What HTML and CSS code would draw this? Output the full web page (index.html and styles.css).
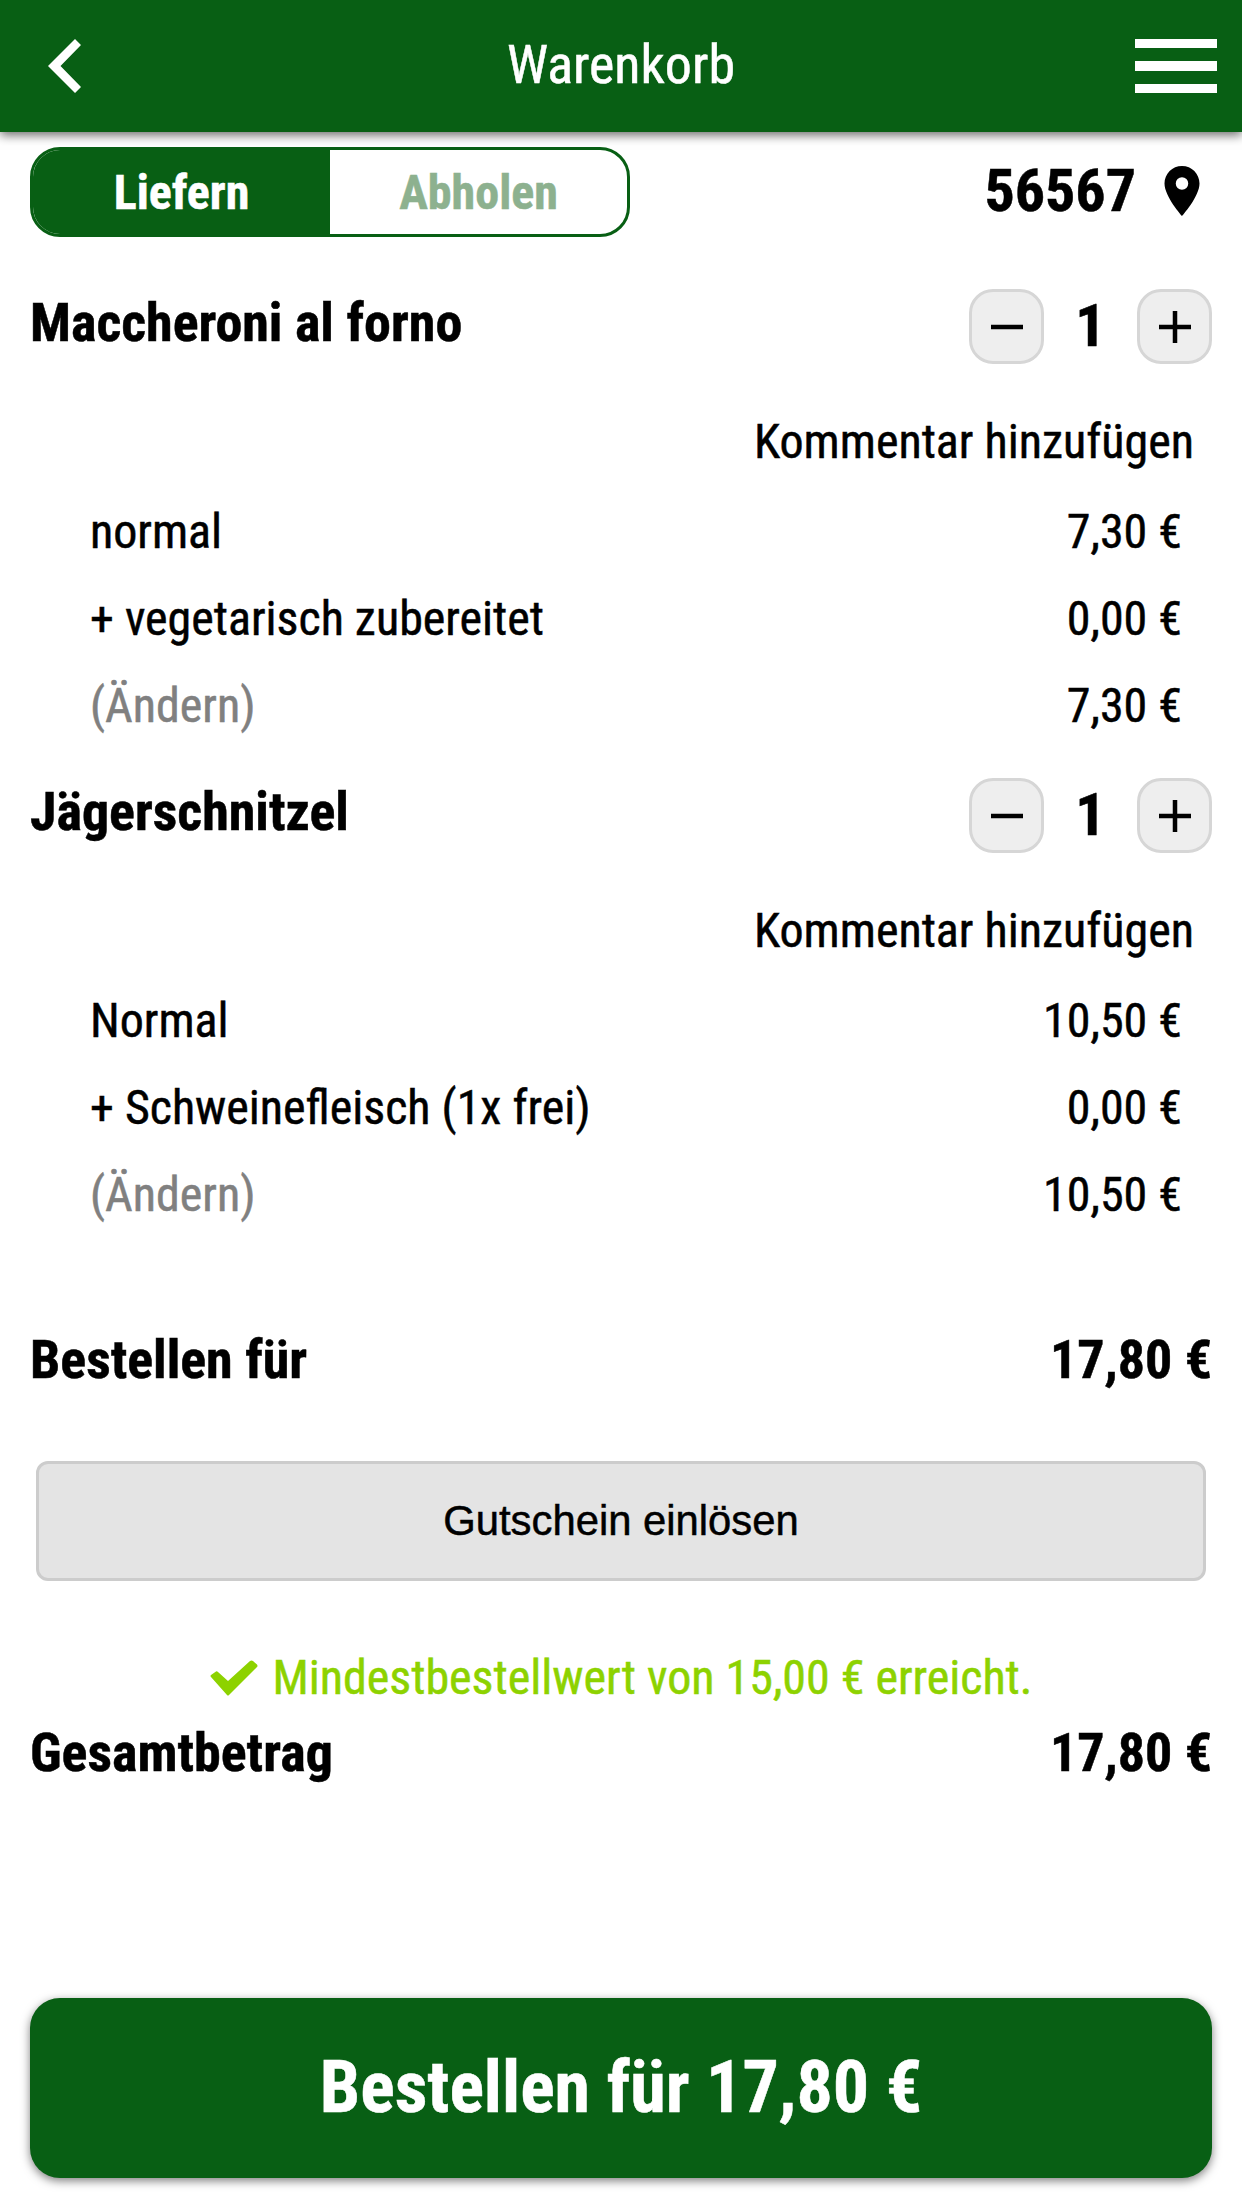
FILE: index.html
```
<!DOCTYPE html>
<html lang="de">
<head>
    <meta charset="UTF-8">
    <title>Warenkorb</title>
    <link rel="stylesheet" href="styles.css">
</head>
<body>
    <!-- Kopfzeile -->
    <header class="header">
        <svg class="back" viewBox="0 0 33 54" aria-label="Zurück"><path d="M0 27 L27 0 L33 6 L12.5 27 L33 48 L27 54Z" /></svg>
        <h1 class="title">Warenkorb</h1>
        <div class="menu" aria-label="Menü"><i></i><i></i><i></i></div>
    </header>

    <main class="cart">
        <!-- Liefern / Abholen -->
        <div class="order-type">
            <div class="toggle">
                <span class="toggle-option active">Liefern</span>
                <span class="toggle-option">Abholen</span>
            </div>
            <div class="zip">
                <span>56567</span>
                <svg class="pin" viewBox="5 2 14 20"><path d="M12 2C8.13 2 5 5.13 5 9c0 5.25 7 13 7 13s7-7.75 7-13c0-3.87-3.13-7-7-7zm0 9.5a2.5 2.5 0 1 1 0-5 2.5 2.5 0 0 1 0 5z" /></svg>
            </div>
        </div>

        <!-- Artikel -->
        <section class="item">
            <div class="item-head">
                <h2 class="item-name">Maccheroni al forno</h2>
                <div class="quantity">
                    <button class="qty-btn" aria-label="Weniger"><svg viewBox="0 0 32 32"><path d="M0 16H32" /></svg></button>
                    <span class="qty">1</span>
                    <button class="qty-btn" aria-label="Mehr"><svg viewBox="0 0 32 32"><path d="M0 16H32M16 0V32" /></svg></button>
                </div>
            </div>
            <div class="comment">Kommentar hinzufügen</div>
            <div class="row"><span>normal</span><span>7,30 €</span></div>
            <div class="row"><span>+ vegetarisch zubereitet</span><span>0,00 €</span></div>
            <div class="row"><span class="change">(Ändern)</span><span>7,30 €</span></div>
        </section>

        <section class="item">
            <div class="item-head">
                <h2 class="item-name">Jägerschnitzel</h2>
                <div class="quantity">
                    <button class="qty-btn" aria-label="Weniger"><svg viewBox="0 0 32 32"><path d="M0 16H32" /></svg></button>
                    <span class="qty">1</span>
                    <button class="qty-btn" aria-label="Mehr"><svg viewBox="0 0 32 32"><path d="M0 16H32M16 0V32" /></svg></button>
                </div>
            </div>
            <div class="comment">Kommentar hinzufügen</div>
            <div class="row"><span>Normal</span><span>10,50 €</span></div>
            <div class="row"><span>+ Schweinefleisch (1x frei)</span><span>0,00 €</span></div>
            <div class="row"><span class="change">(Ändern)</span><span>10,50 €</span></div>
        </section>

        <!-- Summen -->
        <div class="sum subtotal"><span>Bestellen für</span><span>17,80 €</span></div>
        <button class="voucher">Gutschein einlösen</button>
        <div class="minimum">
            <svg class="check" viewBox="0 0 48 36"><path d="M1 17 Q0 16 1 15 L6 11.5 Q7 11 8 12 L18 21 L40 1 Q41.500 0 43 1 L47 4.500 Q48 6 47 7 L19 35 Q18 36 17 35Z" /></svg>
            <span>Mindestbestellwert von 15,00 € erreicht.</span>
        </div>
        <div class="sum total"><span>Gesamtbetrag</span><span>17,80 €</span></div>

        <button class="order-btn">Bestellen für 17,80 €</button>
    </main>
</body>
</html>
```
FILE: styles.css
```
* {
    box-sizing: border-box;
}

body {
    margin: 0;
    height: 2208px;
    display: flex;
    flex-direction: column;
    font-family: "Roboto Condensed", Roboto, sans-serif;
    font-stretch: 75%;
    font-size: 48px;
    color: #000;
    background: #fff;
    -webkit-text-stroke: 0.5px;
}

h1, h2 {
    margin: 0;
}

button {
    font-family: inherit;
    font-stretch: inherit;
    color: inherit;
    padding: 0;
}

/* Kopfzeile */
.header {
    display: grid;
    grid-template-columns: 82px 1fr 82px;
    align-items: center;
    height: 132px;
    padding: 0 25px 0 48px;
    background: #085f14;
    color: #fff;
    box-shadow: 0 3px 10px rgba(0, 0, 0, 0.6);
}

.back {
    width: 33px;
    height: 54px;
    fill: #fff;
}

.title {
    padding-right: 23px;
    font-size: 54px;
    font-weight: 400;
    line-height: 130px;
    height: 132px;
    text-align: center;
}

.menu {
    display: grid;
    gap: 13px;
}

.menu i {
    height: 9.4px;
    background: #fff;
}

/* Inhalt */
.cart {
    flex: 1;
    display: flex;
    flex-direction: column;
    padding: 15px 30px 30px;
}

.order-type {
    display: flex;
    justify-content: space-between;
    align-items: center;
    height: 90px;
    margin-bottom: 52px;
}

.toggle {
    display: grid;
    grid-template-columns: 1fr 1fr;
    width: 600px;
    height: 90px;
    border: 3px solid #085f14;
    border-radius: 30px;
    overflow: hidden;
    font-weight: 700;
    line-height: 86px;
    text-align: center;
}

.toggle-option {
    color: #8db18f;
}

.toggle-option.active {
    background: #085f14;
    color: #fff;
}

.zip {
    display: flex;
    align-items: center;
    gap: 28px;
    padding: 0 12px 3px 0;
    font-size: 60px;
    font-weight: 700;
}

.pin {
    width: 36px;
    height: 50px;
}

/* Artikel */
.item {
    height: 489px;
}

.item-head {
    display: flex;
    justify-content: space-between;
    height: 75px;
}

.item-name {
    font-size: 54px;
    font-weight: 700;
    line-height: 67px;
}

.quantity {
    display: flex;
    align-items: center;
}

.qty-btn {
    display: flex;
    align-items: center;
    justify-content: center;
    width: 75px;
    height: 75px;
    border: 3px solid #d6d6d6;
    border-radius: 24px;
    background: #eee;
}

.qty-btn svg {
    width: 32px;
    height: 32px;
    stroke: #000;
    stroke-width: 4.5;
}

.qty {
    width: 93px;
    font-size: 60px;
    font-weight: 700;
    line-height: 73px;
    height: 75px;
    text-align: center;
}

.comment {
    height: 91px;
    margin-top: 33px;
    padding-right: 18px;
    line-height: 90px;
    text-align: right;
}

.row {
    display: flex;
    justify-content: space-between;
    height: 87px;
    padding: 0 30px 0 60px;
    line-height: 87px;
}

.change {
    color: #808080;
}

/* Summen */
.sum {
    display: flex;
    justify-content: space-between;
    font-size: 54px;
    font-weight: 700;
    line-height: 72px;
}

.subtotal {
    margin-top: 57px;
}

.voucher {
    height: 120px;
    margin: 65px 6px 0;
    border: 3px solid #ccc;
    border-radius: 12px;
    background: #e4e4e4;
    font-family: "Liberation Sans", Arial, sans-serif;
    font-size: 41.8px;
}

.minimum {
    display: flex;
    align-items: center;
    justify-content: center;
    gap: 15px;
    margin-top: 61px;
    line-height: 72px;
    color: #8dd200;
}

.check {
    width: 48px;
    height: 36px;
    fill: #8dd200;
}

.total {
    margin-top: 3px;
}

/* Bestellbutton */
.order-btn {
    height: 180px;
    margin-top: auto;
    padding-bottom: 2px;
    border: none;
    border-radius: 30px;
    background: #085f14;
    color: #fff;
    font-size: 72px;
    font-weight: 700;
    box-shadow: 0 3px 10px rgba(0, 0, 0, 0.5);
}
```
